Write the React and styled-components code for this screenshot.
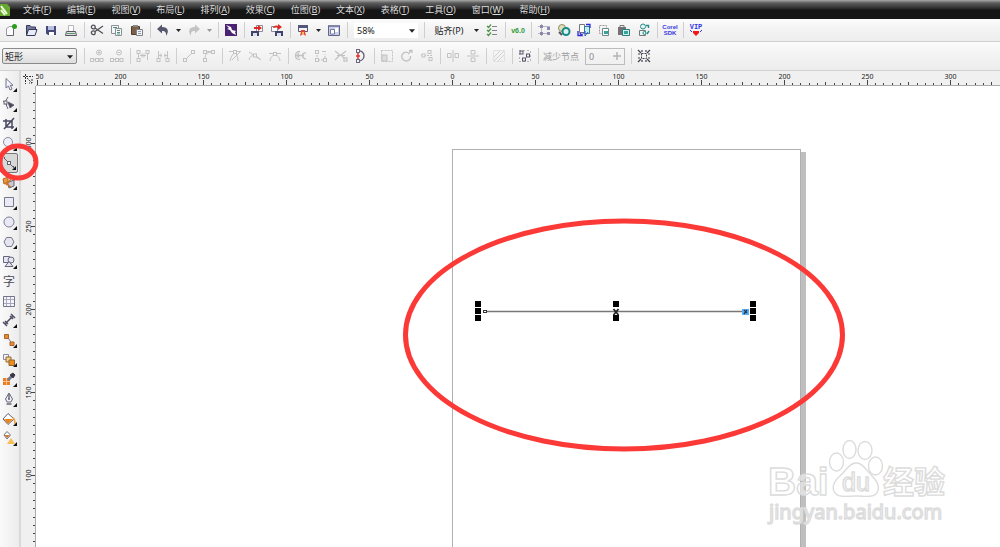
import React, { useEffect, useState } from "react";
import styled, { createGlobalStyle, css } from "styled-components";

const GlobalStyle = createGlobalStyle`
  * {
    box-sizing: border-box;
  }

  body {
    margin: 0;
    overflow: hidden;
    background: #f0f0f0;
    color: #222;
    font-family: "Noto Sans", "Noto Sans CJK SC", sans-serif;
    font-size: 9px;
  }

  button, select, input {
    font: inherit;
    color: inherit;
    padding: 0;
    margin: 0;
    border: 0;
    border-radius: 0;
    background: none;
  }
`;

// px per mm at 58% zoom
const SCALE = 1.6593;

const menus = [
  ["文件", "F"],
  ["编辑", "E"],
  ["视图", "V"],
  ["布局", "L"],
  ["排列", "A"],
  ["效果", "C"],
  ["位图", "B"],
  ["文本", "X"],
  ["表格", "T"],
  ["工具", "O"],
  ["窗口", "W"],
  ["帮助", "H"],
];

const gray = "#c2c2c2";
const node = (x, y, c = gray) => (
  <rect x={x} y={y} width="3" height="3" fill="#f4f4f4" stroke={c} />
);

const icons = {
  // standard bar
  create: (
    <g>
      <path d="M2.5 12.5V5.5L5.5 3.5H9.5V12.5Z" fill="#fdfdff" stroke="#9a9aa6" />
      <path d="M3 12.5H9.500V6" fill="none" stroke="#666674" />
      <circle cx="10.500" cy="3.500" r="2.500" fill="#2b9d1d" />
    </g>
  ),
  open: (
    <g>
      <path d="M2.5 12V2.5H6L7.5 4H11.5V6" fill="#777b9b" stroke="#34385b" />
      <path d="M2.5 12.5L4.5 6.5H13L11 12.5Z" fill="#e8ebf8" stroke="#34385b" />
    </g>
  ),
  save: (
    <g>
      <path d="M2 3H12V12H4L2 10.500Z" fill="#454879" />
      <rect x="4" y="3" width="6" height="4" fill="#b9bfe0" />
      <rect x="5" y="9" width="5" height="3" fill="#fff" />
    </g>
  ),
  print: (
    <g>
      <path d="M4.500 8V2.500H9.500V8" fill="#fff" stroke="#b5b5c0" />
      <path d="M2.500 8.500H11.500L12.500 12.500H1.500Z" fill="#dfdfe7" stroke="#55555f" />
      <path d="M3 10.500H11" stroke="#5a9a60" />
    </g>
  ),
  cut: (
    <g fill="none" stroke="#505058" strokeWidth="1.3">
      <path d="M13 3L5 8.500M13 10.500L5 5" />
      <circle cx="3.300" cy="4" r="1.900" />
      <circle cx="3.300" cy="9.800" r="1.900" />
    </g>
  ),
  copy: (
    <g fill="#f5f6f6" stroke="#8b9197">
      <path d="M1.500 2.500H8.500V10.500H1.500Z" />
      <path d="M5.500 5.500H11.500V12.500H5.500Z" />
      <path d="M3 4.500H7M7 7.500H10M7 9.500H10M7 11H10" stroke="#579184" />
    </g>
  ),
  paste: (
    <g>
      <path d="M1.500 3.500H9.500V11.500H1.500Z" fill="#7b6047" stroke="#503e30" />
      <rect x="3" y="2" width="5" height="2" fill="#888" />
      <path d="M6.500 6.500H12.500V12.500H6.500Z" fill="#f4f4f6" stroke="#7d8088" />
      <path d="M8 8.500H11M8 10.500H11" stroke="#8d9aa7" />
    </g>
  ),
  undo: (
    <path d="M1 6L6 1.500V4C12 4 13.500 8 10 13C10.500 10 9.500 8 6 8V10.500Z" fill="#54566d" />
  ),
  redo: (
    <path d="M13 6L8 1.500V4C2 4 0.500 8 4 13C3.500 10 4.500 8 8 8V10.500Z" fill="#c3c3c6" />
  ),
  launch: (
    <g>
      <rect x="1" y="1" width="12" height="12" fill="#4b2171" />
      <path d="M2 2L7 4L8 7L12 8L11 9L12 12L8 10L6 7L3 6L5 5Z" fill="#fff" />
    </g>
  ),
  importFile: (
    <g>
      <path d="M6.500 8.500V2.500H12.500V8.500Z" fill="#fff" stroke="#8a8a9a" />
      <path d="M1 8H9V13H1Z" fill="#40446a" />
      <rect x="3" y="10" width="4" height="3" fill="#dfe1ef" />
      <path d="M4 4H8V2L12 5L8 8V6H4Z" fill="#dc2a23" />
    </g>
  ),
  exportFile: (
    <g>
      <path d="M1.500 8.500V3.500H7.500V8.500Z" fill="#fff" stroke="#8a8a9a" />
      <path d="M5 8H13V13H5Z" fill="#40446a" />
      <rect x="7" y="10" width="4" height="3" fill="#dfe1ef" />
      <path d="M3 5C4 2 7 2 8 3V1L12 4L8 7V5C6 4 5 5 3 5Z" fill="#dc2a23" />
    </g>
  ),
  publish: (
    <g>
      <path d="M2.500 2.500H11.500V8.500H2.500Z" fill="#f2f2f8" stroke="#55577a" />
      <rect x="2" y="2" width="10" height="3" fill="#55577a" />
      <path d="M5 7H9V9L10 13L7 11L4 13L5 9Z" fill="#e2432c" />
      <rect x="6" y="9" width="2" height="2" fill="#f8ba52" />
    </g>
  ),
  welcome: (
    <g>
      <path d="M1.500 2.500H12.500V12.500H1.500Z" fill="#c9cde6" stroke="#60638b" />
      <rect x="2" y="2" width="10" height="2" fill="#8085ab" />
      <path d="M3.500 6.500H7.500V11H3.500Z" fill="#fff" stroke="#7479a3" />
      <path d="M8 5H11V9H8Z" fill="#fff" />
    </g>
  ),
  options: (
    <g fill="none">
      <path d="M2 3L3.500 4.500L6 1.500M2 7L3.500 8.500L6 5.500M2 11L3.500 12.500L6 9.500" stroke="#4b9648" strokeWidth="1.200" />
      <path d="M7 3.500H12M7 7.500H12M7 11.500H12" stroke="#838389" />
    </g>
  ),
  guides: (
    <g fill="none">
      <path d="M4.500 1V13M1 10.500H13M1 3.500H13" stroke="#b5b5c0" />
      <path d="M3 2H6V5H3ZM3 9H6V12H3ZM10 4H13V7H10ZM10 9H13V12H10Z" fill="#8c88ad" />
    </g>
  ),
  clock: (
    <g>
      <circle cx="5" cy="5" r="3.500" fill="#e3e0b9" stroke="#8e8b63" />
      <path d="M2 9L5 12" stroke="#555" strokeWidth="2" />
      <circle cx="9" cy="8.500" r="3.500" fill="#def1f0" stroke="#188b88" strokeWidth="2" />
    </g>
  ),
  swap: (
    <g>
      <path d="M2.500 1.500H7.500V9.500H2.500Z" fill="#fff" stroke="#777" />
      <path d="M7.500 3.500H12.500V10.500H7.500Z" fill="#c7eeee" stroke="#28809b" />
      <path d="M1 8V12.500H5L3 10M9 1.500H13V5" fill="none" stroke="#2929dc" strokeWidth="1.300" />
      <path d="M5 12L8 8V13L11 9" fill="none" stroke="#4450c8" />
    </g>
  ),
  cloneBox: (
    <g>
      <path d="M2.500 2.500H9.500V10.500H2.500Z" fill="none" stroke="#999" strokeDasharray="2 1" />
      <path d="M5.500 5.500H11.500V12.500H5.500Z" fill="#fff" stroke="#69898b" />
      <rect x="7" y="8" width="4" height="3" fill="#3aa399" />
    </g>
  ),
  lockBox: (
    <g>
      <path d="M3 5V2.500H7V5" fill="none" stroke="#777" />
      <rect x="1" y="4" width="8" height="8" fill="#737373" />
      <path d="M5.500 6.500H12.500V12.500H5.500Z" fill="#d8f0ed" stroke="#23817d" />
      <rect x="7" y="8" width="4" height="3" fill="#3aa399" />
    </g>
  ),
  sync: (
    <g fill="#e3f5f4">
      <circle cx="6" cy="3.500" r="2.500" stroke="#268b87" />
      <path d="M2.500 7.500H8.500V12.500H2.500Z" stroke="#777" />
      <path d="M9 2.500H11.500V5M12 8L10 11" fill="none" stroke="#268b87" strokeWidth="1.400" />
      <circle cx="7.500" cy="10" r="1.500" stroke="#268b87" />
    </g>
  ),
  // shape property bar
  addNode: (
    <g fill="none" stroke={gray}>
      <circle cx="9" cy="3.500" r="2.500" />
      <path d="M7.500 3.500H10.500M9 2V5M1 10.500H12" />
      {node(0.5, 9.5)}{node(5.5, 9.5)}{node(10, 9.5)}
    </g>
  ),
  delNode: (
    <g fill="none" stroke={gray}>
      <circle cx="9" cy="3.500" r="2.500" />
      <path d="M7.500 3.500H10.500M1 10.500H12" />
      {node(0.5, 9.5)}{node(5.5, 9.5)}{node(10, 9.5)}
    </g>
  ),
  joinNode: (
    <g fill="none" stroke={gray}>
      <path d="M2.500 3V11M11.500 3V11M4 6.500H10M6 4.500V8.500M8 4.500V8.500" />
      {node(1, 1.5)}{node(10, 1.5)}{node(1, 9.5)}
    </g>
  ),
  breakNode: (
    <g fill="none" stroke={gray}>
      <path d="M2.500 2V12M11.500 2V12M3 6.500H6M8 6.500H11M5 4.500V8.500M9 4.500V8.500" />
      {node(1, 9.5)}{node(10, 9.5)}
    </g>
  ),
  toLine: (
    <g stroke={gray}>
      <path d="M3 11L11 3" />
      {node(1.5, 9.5)}{node(9.5, 1.5)}
    </g>
  ),
  toCurve: (
    <g fill="none" stroke={gray}>
      <path d="M3 10C3 5 5 3 11 3M3 2.500H12" />
      {node(1.5, 9.5)}{node(1.5, 1.5)}{node(9.500, 1.5)}
    </g>
  ),
  cusp: (
    <g fill="none" stroke={gray}>
      <path d="M2 12C3 8 4 6 7 3C9 6 10 8 10 12M1 2.500H13M4 11L12 3" />
      {node(5.5, 1.5)}
    </g>
  ),
  smooth: (
    <g fill="none" stroke={gray}>
      <path d="M1 3L13 11M1 11C2 6 6 5 12 10" />
      {node(5.5, 5)}
    </g>
  ),
  symmetric: (
    <g fill="none" stroke={gray}>
      <path d="M1 4.500H13M2 12C3 4 11 4 12 12" />
      {node(5.5, 3.5)}
    </g>
  ),
  reverse: (
    <g fill="none" stroke={gray} strokeWidth="1.300">
      <path d="M6 2.500C0 2.500 0 10.500 6 10.500M12 4C8 3 7 9 12 10M3 6.500H10M5 4.500L3 6.500L5 8.500" />
    </g>
  ),
  closeCurve: (
    <g fill="none" stroke={gray}>
      <path d="M3 3V11H11V5" strokeDasharray="2 1" />
      {node(1.5, 1.5)}{node(1.5, 9.5)}{node(9.5, 9.5)}<path d="M8 2.500H12" />
    </g>
  ),
  extract: (
    <g fill="none" stroke={gray} strokeWidth="1.200">
      <path d="M1 2L6 6L1 11M12 2L7 6L12 11M3 6.500H11" />
      {node(10, 9)}
    </g>
  ),
  closePath: (
    <g fill="none">
      <path d="M4 2C12 1 12 12 4 12" stroke="#595974" strokeWidth="1.300" />
      <path d="M4 4V10M2 7H6" stroke="#e33528" strokeWidth="1.500" />
      {node(2.5, 0.5, "#68687e")}{node(2.5, 10.5, "#68687e")}
    </g>
  ),
  stretch: (
    <g fill="none" stroke={gray}>
      <path d="M1.500 1.500H12.500V12.500H1.500Z" strokeDasharray="2 1" />
      <path d="M2 6H7V12H2Z" fill="#ddd" />
    </g>
  ),
  rotate: (
    <g fill="none" stroke={gray} strokeWidth="1.300">
      <path d="M8 3.500C3 2 0 7 3 10.500C6 13.500 11 11.500 10.500 7M8 5L12 1M9 1.500H12V4" />
    </g>
  ),
  alignNode: (
    <g fill="none" stroke={gray}>
      <path d="M1 6.500H13" strokeDasharray="2 1" />
      {node(2, 5)}{node(8, 1.500)}{node(9, 8.500)}
    </g>
  ),
  reflectH: (
    <g fill="none" stroke={gray}>
      <path d="M7 1V13M1.500 4.500H5V8.500H1.500ZM9 4.500H12.500V8.500H9Z" />
    </g>
  ),
  reflectV: (
    <g fill="none" stroke={gray}>
      <path d="M1 7H13M5 1.500H9V5H5ZM5 9H9V12.500H5Z" />
    </g>
  ),
  elastic: (
    <g fill="none" stroke="#d2d2d2">
      <path d="M2 12L12 2M2 8L8 2M6 12L12 6" />
      <path d="M1.500 1.500H12.500V12.500H1.500Z" stroke="#e2e2e2" />
    </g>
  ),
  selectAll: (
    <g fill="none">
      <path d="M1.500 1.500H12.500V12.500H1.500Z" stroke="#777" strokeDasharray="1 3" />
      {node(2, 2, "#55556a")}{node(8.500, 5, "#55556a")}{node(4.500, 9, "#55556a")}
    </g>
  ),
  bounding: (
    <g stroke="#40404c" strokeWidth="1.200" fill="none">
      <path d="M1 1L4 4M5 1V3M9 1V3M13 1L10 4M1 5H3M1 9H3M11 5H13M11 9H13M1 13L4 10M5 11V13M9 11V13M13 13L10 10" />
      <path d="M4.500 4.500H9.500V9.500H4.500Z" strokeWidth="1" strokeDasharray="2 1" />
    </g>
  ),
  // toolbox
  pick: <path d="M4 1.500V11L6.500 9L8 13L10 12L8.300 8.300H11Z" fill="#f4f4ff" stroke="#73738a" />,
  shape: (
    <g fill="none" stroke="#656577">
      <path d="M6 0L3 5L6 12M1 4L5 8" />
      {node(2, 4, "#656577")}
      <path d="M6 5L12 8L8 11Z" fill="#454559" />
    </g>
  ),
  crop: (
    <g fill="none" stroke="#494961" strokeWidth="1.500">
      <path d="M4 2V10H12M1 4H10V12M2 12L12 1" />
    </g>
  ),
  zoomTool: (
    <g>
      <circle cx="6" cy="6" r="4.500" fill="#edf0fa" stroke="#8b8ba0" />
      <path d="M9 10L12 13" stroke="#858599" strokeWidth="2" />
    </g>
  ),
  line: (
    <g stroke="#60606e">
      <path d="M2 2L12 12" />
      {node(5.5, 5.5, "#60606e")}
      <path d="M2 2H3M11 11H12" strokeWidth="2" />
    </g>
  ),
  smart: (
    <g>
      <path d="M1 3L6 1V6L2 8Z" fill="#ee953b" stroke="#b16727" />
      <path d="M5.500 6.500L12 4V10L7 12Z" fill="#c9c9d4" stroke="#65656f" />
      <path d="M3 7L9 11M9 3L4 9" stroke="#d27523" strokeWidth="1.500" />
    </g>
  ),
  rect: <path d="M2.500 2.500H11.500V11.500H2.500Z" fill="#eaeaf6" stroke="#77778c" />,
  ellipse: <circle cx="7" cy="7" r="5" fill="#eaeaf6" stroke="#80809a" />,
  polygon: <path d="M4.500 2.500H9.500L12 7L9.500 11.500H4.500L2 7Z" fill="#e5e5f1" stroke="#77778c" />,
  basic: (
    <g fill="#e5e5f1" stroke="#66667c">
      <path d="M1.500 2.500H7.500V8.500H1.500Z" />
      <circle cx="9" cy="6" r="3" />
      <path d="M7 7.500L11 12.500H3Z" />
    </g>
  ),
  table: (
    <g fill="none" stroke="#a8a8bc">
      <path d="M1.500 2.500H12.500V12.500H1.500Z" fill="#f4f6fc" stroke="#737389" />
      <path d="M4.500 3V12M8.500 3V12M2 5.500H12M2 9.500H12" />
    </g>
  ),
  dimension: (
    <g stroke="#4c4c60" strokeWidth="1.500" fill="#4c4c60">
      <path d="M3 11L11 3M1 9L5 13M9 1L13 5M3 8L6 11M8 3L11 6" />
    </g>
  ),
  connector: (
    <g>
      <path d="M5 3L10 11" stroke="#77778a" />
      <path d="M2.500 1.500H6.500V5.500H2.500ZM8 9H12V12.500H8Z" fill="#ed8a2b" stroke="#a96330" />
    </g>
  ),
  blend: (
    <g stroke="#8b6737">
      <path d="M1.500 1.500H6.500V6.500H1.500Z" fill="#f5f5fa" stroke="#8b8ba0" />
      <path d="M4 4H9V9H4Z" fill="#f8ce88" />
      <path d="M7 7H12.500V12.500H7Z" fill="#f08b1b" />
    </g>
  ),
  eyedrop: (
    <g>
      <path d="M1 6H8V13H1Z" fill="#ed7d1f" />
      <path d="M1 9.500H8M4.500 6V13" stroke="#f6c193" />
      <path d="M6 8L10 4" stroke="#767689" strokeWidth="3" />
      <path d="M8 3L11 6L13 3L11 1Z" fill="#38384b" stroke="#38384b" />
    </g>
  ),
  pen: (
    <g>
      <path d="M7 1L3.500 7L5 10H9L10.500 7Z" fill="#f1f1f8" stroke="#66667a" />
      <path d="M7 2V7M4.500 12H9.500" stroke="#66667a" strokeWidth="1.400" />
      <circle cx="7" cy="7" r="1" fill="#66667a" />
    </g>
  ),
  fill: (
    <g>
      <path d="M6 1.500L12 7L6 12.500L1 7Z" fill="#fff" stroke="#606073" />
      <path d="M2 7H11L6 12Z" fill="#ea8518" />
      <path d="M11 6C13 7 13 9 13 12" fill="none" stroke="#f0a33d" strokeWidth="1.500" />
    </g>
  ),
  interactiveFill: (
    <g>
      <path d="M5 0.500L8.500 4L5 8L2 4Z" fill="#fff" stroke="#707080" />
      <path d="M2.500 4H8L5 7Z" fill="#cf7737" />
      <path d="M9 7L13 13H5Z" fill="#f8bd55" />
    </g>
  ),
  corner: (
    <g fill="none" stroke="#333">
      <path d="M3.500 2V12M1 4.500H11" strokeDasharray="2 1" />
      <path d="M5 6L10 11M10 7V11H7" strokeDasharray="2 1" />
    </g>
  ),
};

const standardTools = [
  ["create", "新建"], ["open", "打开"], ["save", "保存"], ["print", "打印"], "|",
  ["cut", "剪切"], ["copy", "复制"], ["paste", "粘贴"], "|",
  ["undo", "撤消"], "v", ["redo", "重做"], "w", "|",
  ["launch", "搜索内容"], "|",
  ["importFile", "导入"], ["exportFile", "导出"], "|",
  ["publish", "应用程序启动器"], "v", ["welcome", "欢迎屏幕"], "|",
];

const pluginTools = [
  ["guides", "辅助线"], ["clock", "时间"], ["swap", "交换"],
  ["cloneBox", "克隆"], ["lockBox", "锁定"], ["sync", "同步"], "|",
];

const nodeTools = [
  "|", ["addNode", "添加节点"], ["delNode", "删除节点"], "|",
  ["joinNode", "连接两个节点"], ["breakNode", "断开曲线"], "|",
  ["toLine", "转换为线条"], ["toCurve", "转换为曲线"], "|",
  ["cusp", "尖突节点"], ["smooth", "平滑节点"], ["symmetric", "对称节点"], "|",
  ["reverse", "反转方向"], ["closeCurve", "延长曲线"], ["extract", "提取子路径"], ["closePath", "闭合曲线"], "|",
  ["stretch", "延展"], ["rotate", "旋转"], ["alignNode", "对齐节点"], "|",
  ["reflectH", "水平反射"], ["reflectV", "垂直反射"], "|",
  ["elastic", "弹性模式"], "|", ["selectAll", "选择所有节点"], "|",
];

const toolbox = [
  ["pick", "选择"], ["shape", "形状"], ["crop", "裁剪"], ["zoomTool", "缩放"],
  ["line", "手绘"], ["smart", "智能填充"], ["rect", "矩形"], ["ellipse", "椭圆形"],
  ["polygon", "多边形"], ["basic", "基本形状"], ["text", "文本"], ["table", "表格"],
  ["dimension", "度量"], ["connector", "连接器"], ["blend", "调和"],
  ["eyedrop", "滴管"], ["pen", "轮廓笔"], ["fill", "填充"], ["interactiveFill", "交互式填充"],
];

const Icon = ({ name }) => (
  <svg width="14" height="14" viewBox="0 0 14 14" aria-hidden="true">
    {icons[name]}
  </svg>
);

const Caret = ({ color = "#222" }) => (
  <svg width="5" height="3" viewBox="0 0 5 3" aria-hidden="true">
    <path d="M0 0H5L2.500 3Z" fill={color} />
  </svg>
);

const Tools = ({ items }) =>
  items.map((item, i) => {
    if (item === "|") return <Divider key={i} />;
    if (item === "v" || item === "w")
      return (
        <DropButton key={i} aria-label="展开">
          <Caret color={item === "w" ? "#999" : "#222"} />
        </DropButton>
      );
    return (
      <ToolButton key={i} aria-label={item[1]}>
        <Icon name={item[0]} />
      </ToolButton>
    );
  });

const useWindowSize = () => {
  const read = () => ({ width: window.innerWidth, height: window.innerHeight });
  const [size, setSize] = useState(read);

  useEffect(() => {
    const onResize = () => setSize(read());
    window.addEventListener("resize", onResize);
    return () => window.removeEventListener("resize", onResize);
  }, []);

  return size;
};

const HorizontalRuler = ({ width }) => {
  const ticks = [];
  for (let mm = -250; 452 + mm * SCALE < width; mm += 5) ticks.push(mm);
  return (
    <TopRuler>
      <svg width="100%" height="15">
        {ticks.map((mm) => {
          const x = Math.round(416 + mm * SCALE) + 0.5;
          const major = mm % 50 === 0;
          const len = major ? 5 : mm % 25 === 0 ? 3 : 2;
          return (
            <g key={mm}>
              <path d={`M${x} ${14 - len}V14`} stroke="#444" />
              {major && (
                <text x={x} y="8" textAnchor="middle">
                  {Math.abs(mm)}
                </text>
              )}
            </g>
          );
        })}
      </svg>
    </TopRuler>
  );
};

const VerticalRuler = ({ height }) => {
  const ticks = [];
  for (let mm = 330; 641 - mm * SCALE < height; mm -= 5) ticks.push(mm);
  return (
    <SideRuler>
      <svg width="15" height="100%">
        {ticks.map((mm) => {
          const y = Math.round(555 - mm * SCALE) + 0.5;
          const major = mm % 50 === 0;
          const len = major ? 4 : 2;
          return (
            <g key={mm}>
              <path d={`M${14 - len} ${y}H14`} stroke="#444" />
              {major && (
                <text transform={`translate(10 ${y}) rotate(-90)`} textAnchor="middle">
                  {Math.abs(mm)}
                </text>
              )}
            </g>
          );
        })}
      </svg>
    </SideRuler>
  );
};

const handles = [
  [439, 215], [439, 222], [439, 229],
  [577, 215], [577, 229],
  [714, 215], [714, 222], [714, 229],
];

const Watermark = () => (
  <Mark width="190" height="96" viewBox="0 0 190 96">
    <g fill="#fff" fillOpacity="0.5" stroke="#dcdcdc" strokeWidth="1.400">
      <ellipse cx="71.500" cy="26" rx="7" ry="9" />
      <ellipse cx="84.500" cy="13.500" rx="6.500" ry="9" />
      <ellipse cx="100" cy="14.500" rx="7" ry="9" />
      <ellipse cx="110.500" cy="30" rx="7" ry="9" />
      <path d="M91 27C84 27 81 35 75 40C68 46 66 53 71 58C75 62 83 60 91 60C99 60 107 62 111 58C116 52 113 46 107 40C101 34 98 27 91 27Z" />
      <text x="3" y="59" fontFamily="Liberation Sans, sans-serif" fontWeight="700" fontSize="39">Bai</text>
      <text x="77" y="55" fontFamily="Liberation Sans, sans-serif" fontSize="25">du</text>
      <text x="118" y="57" fontFamily="Noto Sans CJK SC, sans-serif" fontWeight="700" fontSize="31">经验</text>
      <text x="4" y="83" fontFamily="Noto Sans, sans-serif" fontSize="20">jingyan.baidu.com</text>
    </g>
  </Mark>
);

export default function App() {
  const { width, height } = useWindowSize();

  return (
    <>
      <GlobalStyle />
      <Window>
        <MenuBar>
          <svg width="10" height="16" viewBox="0 0 10 16" aria-hidden="true">
            <path d="M0 2H7L10 5V14H0Z" fill="#69a82f" />
            <path d="M1 4L7 12M1 8L5 13" stroke="#f2ffe4" strokeWidth="2" />
          </svg>
          <MenuList>
            {menus.map(([label, key]) => (
              <MenuItem key={key}>
                {label}(<u>{key}</u>)
              </MenuItem>
            ))}
          </MenuList>
        </MenuBar>

        <StandardBar>
          <Tools items={standardTools} />
          <ZoomBox>
            <select aria-label="缩放级别" defaultValue="58%">
              <option>58%</option>
            </select>
            <Caret />
          </ZoomBox>
          <Divider />
          <SnapButton>贴齐(P)</SnapButton>
          <Tools items={["v", ["options", "选项"], "|"]} />
          <VersionButton>v6.0</VersionButton>
          <Divider />
          <Tools items={pluginTools} />
          <SdkButton>
            <span>Corel</span>
            <span>SDK</span>
          </SdkButton>
          <Divider />
          <VipButton>
            <span>VIP</span>
            <svg width="12" height="6" viewBox="0 0 12 6" aria-hidden="true">
              <path d="M0 0L2 2M12 0L10 2" stroke="#3636e5" />
              <path d="M3 1H9V3L6 6L3 3Z" fill="#f21818" />
            </svg>
          </VipButton>
        </StandardBar>

        <PropertyBar>
          <ShapeBox>
            <select aria-label="选取模式" defaultValue="矩形">
              <option>矩形</option>
            </select>
            <Caret />
          </ShapeBox>
          <Tools items={nodeTools} />
          <ReduceLabel htmlFor="reduce">减少节点</ReduceLabel>
          <ReduceField>
            <input id="reduce" defaultValue="0" disabled />
            <svg width="8" height="8" viewBox="0 0 8 8" aria-hidden="true">
              <path d="M0 4H8M4 0V8" stroke="#b5b5b5" strokeWidth="1.500" />
            </svg>
          </ReduceField>
          <Tools items={["|", ["bounding", "边框"]]} />
        </PropertyBar>

        <Workspace>
          <Toolbox>
            {toolbox.map(([name, label]) => (
              <ToolboxButton
                key={name}
                aria-label={label}
                $active={name === "line"}
                $plain={name === "text" || name === "table"}
              >
                {name === "text" ? <TextGlyph>字</TextGlyph> : <Icon name={name} />}
              </ToolboxButton>
            ))}
          </Toolbox>
          <Editor>
            <RulerCorner>
              <Icon name="corner" />
            </RulerCorner>
            <HorizontalRuler width={width} />
            <VerticalRuler height={height} />
            <Canvas>
              <Paper />
              <Artwork>
                <path d="M449 225.500H710" stroke="#777" strokeWidth="1.500" />
                <rect x="447.500" y="224.500" width="3" height="2" fill="#fff" stroke="#333" />
                {handles.map(([x, y]) => (
                  <rect key={`${x}-${y}`} x={x} y={y} width="6" height="6" />
                ))}
                <path d="M577.500 223L582.500 229M582.500 223L577.500 229" stroke="#222" strokeWidth="1.800" />
                <rect x="706" y="223" width="7" height="6" fill="#58adf7" />
                <path d="M708 224L711 227M711 224L708 228" stroke="#263c57" strokeWidth="1.300" />
                <ellipse cx="588" cy="249" rx="218.500" ry="114" fill="none" stroke="#fb3a38" strokeWidth="5" />
              </Artwork>
              <Watermark />
            </Canvas>
          </Editor>
          <ToolRing width="40" height="40" viewBox="0 0 40 40">
            <ellipse cx="18" cy="20" rx="18" ry="16" fill="none" stroke="#fb3a38" strokeWidth="5" />
          </ToolRing>
        </Workspace>
      </Window>
    </>
  );
}

const Window = styled.div`
  height: 100vh;
  display: flex;
  flex-direction: column;
  overflow: hidden;
`;

const MenuBar = styled.header`
  height: 19px;
  flex: none;
  display: flex;
  align-items: center;
  background: linear-gradient(#a8a8a8, #5c5c5c 3px, #303030 8px, #151515 10px, #161616);
`;

const MenuList = styled.nav`
  display: flex;
  padding-left: 5px;
`;

const MenuItem = styled.button`
  padding: 0 8px;
  line-height: 18px;
  color: #dcdcdc;
  white-space: nowrap;

  u {
    text-underline-offset: 1px;
  }
`;

const Bar = styled.div`
  flex: none;
  display: flex;
  align-items: center;
  background: linear-gradient(#fcfcfc, #f4f4f4 40%, #ededed);
  border-bottom: 1px solid #d2d2d2;
`;

const StandardBar = styled(Bar)`
  height: 23px;
  padding-left: 1px;
`;

const PropertyBar = styled(Bar)`
  height: 29px;
  padding-left: 2px;
`;

const Divider = styled.span`
  flex: none;
  width: 6px;
  height: 16px;
  background: linear-gradient(#cfcfcf, #cfcfcf) center / 1px 100% no-repeat;
`;

const ToolButton = styled.button`
  flex: none;
  width: 20px;
  height: 20px;
  display: flex;
  align-items: center;
  justify-content: center;
`;

const DropButton = styled(ToolButton)`
  width: 11px;
`;

const SnapButton = styled(ToolButton)`
  width: 44px;
  white-space: nowrap;
`;

const VersionButton = styled(ToolButton)`
  color: #2c9a35;
  font-family: "Liberation Sans", sans-serif;
  font-size: 7px;
  font-weight: bold;
`;

const SdkButton = styled(ToolButton)`
  flex-direction: column;
  color: #3636e5;
  font-family: "Liberation Sans", sans-serif;
  font-size: 6px;
  font-weight: bold;
  line-height: 6px;
`;

const VipButton = styled(SdkButton)`
  font-family: "Liberation Mono", monospace;
  font-size: 7px;
`;

const comboBox = css`
  flex: none;
  position: relative;
  display: flex;

  select {
    width: 100%;
    appearance: none;
    outline: none;
  }

  svg {
    position: absolute;
    right: 3px;
    top: 6px;
    width: 6px;
    height: 4px;
    pointer-events: none;
  }
`;

const ZoomBox = styled.span`
  ${comboBox}
  width: 64px;
  height: 15px;
  margin: 0 3px 0 4px;
  background: #fff;

  select {
    padding-left: 3px;
  }
`;

const ShapeBox = styled.span`
  ${comboBox}
  width: 75px;
  height: 16px;
  margin-right: 4px;
  border: 1px solid #8a8a8a;
  border-radius: 2px;
  background: linear-gradient(#f4f4f4, #dedede);

  select {
    padding-left: 2px;
  }
`;

const ReduceLabel = styled.label`
  color: #9c9c9c;
  padding: 0 6px 0 2px;
  white-space: nowrap;
`;

const ReduceField = styled.span`
  width: 40px;
  height: 17px;
  margin-right: 3px;
  padding: 0 3px;
  display: flex;
  align-items: center;
  justify-content: space-between;
  border: 1px solid #bcbcbc;

  input {
    width: 16px;
    color: #8b8b95;
  }
`;

const Workspace = styled.main`
  position: relative;
  flex: 1;
  min-height: 0;
  display: flex;
`;

const Toolbox = styled.aside`
  flex: none;
  width: 21px;
  padding-top: 3px;
  background: linear-gradient(90deg, #fafafa, #ececec);
  border-right: 2px solid #d9d9d9;
`;

const ToolboxButton = styled.button`
  position: relative;
  width: 18px;
  height: 20px;
  display: flex;
  align-items: center;
  justify-content: center;

  &:nth-child(3n) {
    height: 19px;
  }

  ${({ $active }) =>
    $active &&
    css`
      border: 1px solid #777;
      border-radius: 2px;
      background: #d8d8d8;
    `}

  ${({ $plain }) =>
    !$plain &&
    css`
      &::after {
        content: "";
        position: absolute;
        right: 1px;
        bottom: 2px;
        border-left: 4px solid transparent;
        border-bottom: 4px solid #111;
      }
    `}
`;

const TextGlyph = styled.span`
  color: #4b4b5b;
  font-family: "Noto Sans CJK SC", sans-serif;
  font-size: 12px;
  line-height: 14px;
`;

const Editor = styled.section`
  flex: 1;
  min-width: 0;
  display: grid;
  grid-template: 15px 1fr / 15px 1fr;
`;

const RulerCorner = styled.div`
  display: flex;
  align-items: center;
  justify-content: center;
`;

const rulerText = css`
  text {
    font-size: 7px;
    fill: #222;
  }
`;

const TopRuler = styled.div`
  ${rulerText}
  overflow: hidden;
  border-bottom: 1px solid #aaa;
`;

const SideRuler = styled.div`
  ${rulerText}
  overflow: hidden;
  min-height: 0;
  border-right: 1px solid #aaa;
`;

const Canvas = styled.div`
  position: relative;
  overflow: hidden;
  background: #fff;
`;

const Paper = styled.div`
  position: absolute;
  left: 416px;
  top: 63px;
  width: 349px;
  height: 494px;
  border: 1px solid #b0b0b0;
  box-shadow: 5px 3px 0 #bfbfbf;
  background: #fff;
`;

const Artwork = styled.svg`
  position: absolute;
  inset: 0;
  width: 100%;
  height: 100%;
`;

const Mark = styled.svg`
  position: absolute;
  right: 45px;
  bottom: 15px;
`;

const ToolRing = styled.svg`
  position: absolute;
  left: 0;
  top: 71px;
  pointer-events: none;
`;
